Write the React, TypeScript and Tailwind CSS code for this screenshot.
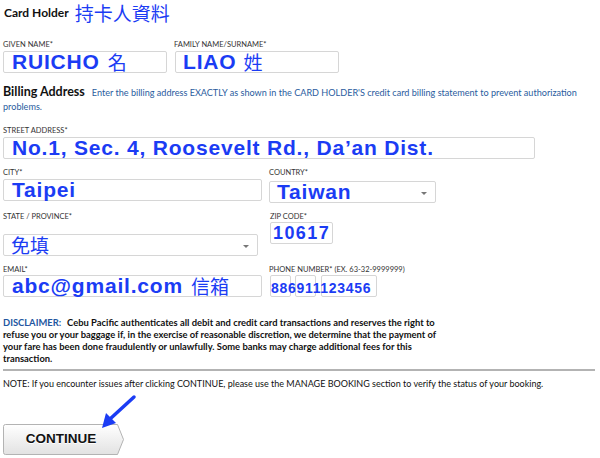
import React from 'react';

const sans = "font-['Lato','Open_Sans',sans-serif]";
const note = "font-['Liberation_Sans',Arial,sans-serif] font-bold text-[#1b3cf4]";
const cjk = "font-['Noto_Sans_CJK_TC','Noto_Sans_CJK_SC',sans-serif] font-normal text-[#1b3cf4]";

function Label({ children }: { children: React.ReactNode }) {
  return <div className={`${sans} text-[7.5px] leading-[9px] text-[#333] uppercase`}>{children}</div>;
}

function Box({ className = '', children }: { className?: string; children?: React.ReactNode }) {
  return (
    <div className={`h-[22px] border border-[#d6d6d6] rounded-[2px] bg-white flex items-center relative ${className}`}>
      {children}
    </div>
  );
}

function Caret() {
  return <span className="absolute right-[8px] top-[10px] w-0 h-0 border-l-[3px] border-r-[3px] border-t-[3px] border-l-transparent border-r-transparent border-t-[#777]" />;
}

export default function App() {
  return (
    <div className="w-[600px] h-[458px] bg-white relative overflow-hidden px-[3px] text-[#111]">
      {/* header */}
      <div className="h-[25px] flex items-center gap-[6px] pl-[1px]">
        <span className={`${sans} font-bold text-[12px]`}>Card Holder</span>
        <span className={`${cjk} text-[19px] leading-[22px]`}>持卡人資料</span>
      </div>

      {/* names */}
      <div className="flex mt-[15px]">
        <div className="w-[171px]">
          <Label>Given Name*</Label>
          <Box className="w-[164px] mt-[2px] pl-[8px]">
            <span className={`${note} text-[21px] tracking-[0.8px]`}>RUICHO</span>
            <span className={`${cjk} text-[19px] ml-[8px]`}>名</span>
          </Box>
        </div>
        <div>
          <Label>Family Name/Surname*</Label>
          <Box className="w-[164px] mt-[2px] ml-[1px] pl-[7px]">
            <span className={`${note} text-[21px] tracking-[0.8px]`}>LIAO</span>
            <span className={`${cjk} text-[19px] ml-[7px]`}>姓</span>
          </Box>
        </div>
      </div>

      {/* billing address */}
      <p className={`${sans} mt-[12px] text-[12.5px] leading-[13px]`}>
        <span className="font-bold text-[12.5px] leading-[13px]">Billing Address</span>
        <span className="text-[9.1px] leading-[13px] text-[#2a5c9e] ml-[7px]">
          Enter the billing address EXACTLY as shown in the CARD HOLDER'S credit card billing statement to prevent authorization
          <br />
          problems.
        </span>
      </p>

      {/* street */}
      <div className="mt-[13px]">
        <Label>Street Address*</Label>
        <Box className="w-[532px] mt-[2px] pl-[8px]">
          <span className={`${note} text-[21px] tracking-[0.8px]`}>No.1, Sec. 4, Roosevelt Rd., Da’an Dist.</span>
        </Box>
      </div>

      {/* city / country */}
      <div className="flex mt-[9px]">
        <div className="w-[266px]">
          <Label>City*</Label>
          <Box className="w-[259px] mt-[2px] pl-[8px]">
            <span className={`${note} text-[21px] tracking-[0.8px]`}>Taipei</span>
          </Box>
        </div>
        <div>
          <Label>Country*</Label>
          <Box className="w-[167px] mt-[4px] pl-[7px]">
            <span className={`${note} text-[21px] tracking-[0.8px]`}>Taiwan</span>
            <Caret />
          </Box>
        </div>
      </div>

      {/* state / zip */}
      <div className="flex mt-[9px]">
        <div className="w-[266px]">
          <Label>State / Province*</Label>
          <Box className="w-[255px] mt-[13px] pl-[7px]">
            <span className={`${cjk} text-[19px]`}>免填</span>
            <Caret />
          </Box>
        </div>
        <div className="pl-[1px]">
          <Label>Zip Code*</Label>
          <Box className="w-[63px] mt-[1px] pl-[2px]">
            <span className={`${note} text-[18px] tracking-[1.4px]`}>10617</span>
          </Box>
        </div>
      </div>

      {/* email / phone */}
      <div className="flex mt-[9px]">
        <div className="w-[266px]">
          <Label>Email*</Label>
          <Box className="w-[259px] mt-[1px] pl-[8px]">
            <span className={`${note} text-[21px] tracking-[0.8px]`}>abc@gmail.com</span>
            <span className={`${cjk} text-[19px] ml-[8px]`}>信箱</span>
          </Box>
        </div>
        <div>
          <Label>
            Phone Number* <span className="normal-case">(EX. 63-32-9999999)</span>
          </Label>
          <div className="relative flex mt-[1px] ml-[1px]">
            <Box className="w-[21px]" />
            <Box className="w-[21px] ml-[4px]" />
            <Box className="w-[56px] ml-[5px]" />
            <span className={`${note} text-[14px] tracking-[0.7px] absolute left-[1px] top-[3px]`}>886911123456</span>
          </div>
        </div>
      </div>

      {/* disclaimer */}
      <p className={`${sans} font-bold text-[9.4px] leading-[12px] mt-[20px]`}>
        <span className="text-[#2356a0]">DISCLAIMER:</span>
        <span className="ml-[6px]">Cebu Pacific authenticates all debit and credit card transactions and reserves the right to</span>
        <br />
        refuse you or your baggage if, in the exercise of reasonable discretion, we determine that the payment of
        <br />
        your fare has been done fraudulently or unlawfully. Some banks may charge additional fees for this
        <br />
        transaction.
      </p>

      <div className="mt-[4px] border-t-2 border-[#b3b3b3] w-[592px]" />

      <p className={`${sans} text-[9px] leading-[12px] mt-[7px]`}>
        NOTE: If you encounter issues after clicking CONTINUE, please use the MANAGE BOOKING section to verify the status of your booking.
      </p>

      {/* continue */}
      <button className="relative mt-[34px] w-[121px] h-[31px] flex items-center justify-center pr-[5px]">
        <svg className="absolute inset-0" width="121" height="31" viewBox="0 0 121 31">
          <defs>
            <linearGradient id="btn" x1="0" y1="0" x2="0" y2="1">
              <stop offset="0" stopColor="#ffffff" />
              <stop offset="1" stopColor="#e2e2e2" />
            </linearGradient>
          </defs>
          <path d="M2.5 0.5 H114.5 L120.5 15.5 L114.5 30.5 H2.5 Q0.5 30.5 0.5 28.5 V2.5 Q0.5 0.5 2.5 0.5 Z" fill="url(#btn)" stroke="#b3b3b3" />
        </svg>
        <span className="relative font-['Liberation_Sans',Arial,sans-serif] font-bold text-[13.5px] text-[#111] [text-shadow:0_1px_0_#fff]">CONTINUE</span>
      </button>

      {/* annotation arrow */}
      <svg className="absolute left-[96px] top-[392px]" width="44" height="40" viewBox="96 392 44 40">
        <line x1="134" y1="397" x2="110" y2="419" stroke="#1b3cf4" strokeWidth="3.5" strokeLinecap="round" />
        <polygon points="102,428 116,423 106,413" fill="#1b3cf4" />
      </svg>
    </div>
  );
}
